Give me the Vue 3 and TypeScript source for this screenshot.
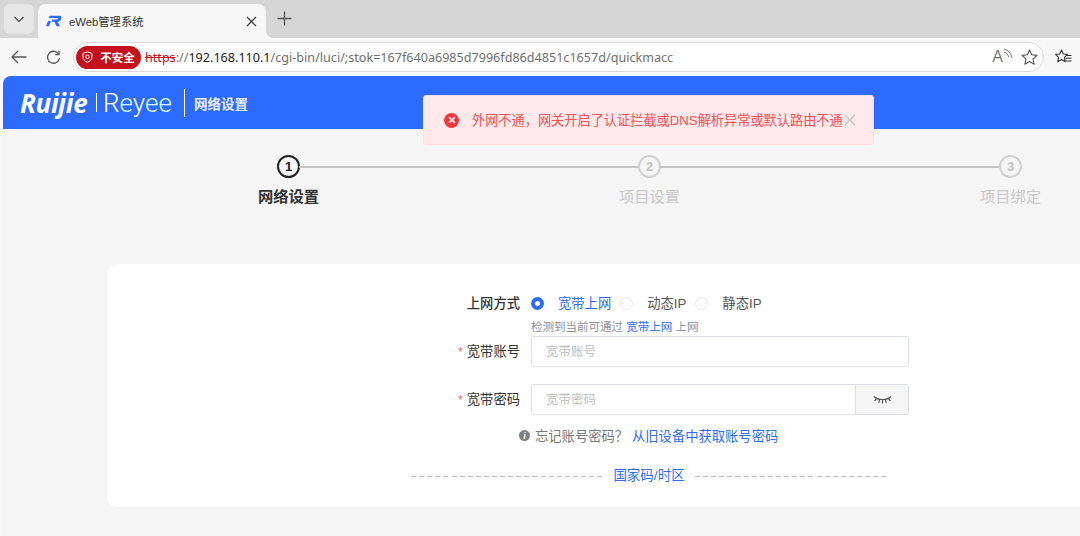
<template>
  <div class="window">
    <!-- browser tab strip -->
    <div class="tabstrip">
      <button class="tab-search">
        <svg width="12" height="12" viewBox="0 0 12 12"><path d="M1.5 4 L6 8.5 L10.5 4" fill="none" stroke="#444" stroke-width="1.2" /></svg>
      </button>
      <div class="tab">
        <svg class="favicon" width="16" height="12" viewBox="0 0 16 12">
          <path d="M3.5 0.8 H14 C15.6 .8 15.8 2.6 15 4.4 C14.4 5.8 13 6.6 11.6 6.8 L14 11.2 H10.6 L8.4 6.8 H5.4 L6.2 4.6 H11.4 C12.2 4.6 12.6 3 11.6 3 H2.8 Z" fill="#2d6bff" />
          <path d="M2 6 H5 L3 11.2 H0 Z" fill="#2d6bff" />
        </svg>
        <span class="tab-title">eWeb管理系统</span>
        <svg class="tab-close" width="11" height="11" viewBox="0 0 11 11"><path d="M1 1 L10 10 M10 1 L1 10" stroke="#333" stroke-width="1.2" /></svg>
      </div>
      <svg class="new-tab" width="15" height="15" viewBox="0 0 15 15"><path d="M7.5 0.5 V14.5 M0.5 7.5 H14.5" stroke="#555" stroke-width="1.3" /></svg>
    </div>

    <!-- address bar -->
    <div class="toolbar">
      <svg class="nav-back" width="16" height="14" viewBox="0 0 16 14"><path d="M15.5 7 H1 M7 1 L1 7 L7 13" fill="none" stroke="#555" stroke-width="1.3" /></svg>
      <svg class="nav-reload" width="15" height="15" viewBox="0 0 15 15"><path d="M12.6 4 A6 6 0 1 0 13.5 8" fill="none" stroke="#555" stroke-width="1.3" /><path d="M13 0.8 V4.6 H9.2" fill="none" stroke="#555" stroke-width="1.3" /></svg>
      <div class="omnibox">
        <span class="not-secure">
          <svg width="11" height="12" viewBox="0 0 11 12">
            <path d="M5.5 0.8 L10 2.4 V6 C10 8.6 7.8 10.4 5.5 11.2 C3.2 10.4 1 8.6 1 6 V2.4 Z" fill="none" stroke="#fff" stroke-width="1" />
            <circle cx="5.5" cy="5.8" r="1.8" fill="none" stroke="#fff" stroke-width="0.9" />
          </svg>
          不安全
        </span>
        <span class="url"><s class="scheme">https</s><span class="url-dim">://</span><span class="url-host">192.168.110.1</span><span class="url-dim">/cgi-bin/luci/;stok=167f640a6985d7996fd86d4851c1657d/quickmacc</span></span>
        <span class="read-aloud">A<svg width="10" height="11" viewBox="0 0 10 11"><path d="M1 1 C5 2 8 5 9 10 M1 4 C3.6 4.6 5 6.4 5.6 9" fill="none" stroke="#777" stroke-width="1" /></svg></span>
        <svg class="star" width="17" height="16" viewBox="0 0 17 16"><path d="M8.5 1 L10.7 5.8 L16 6.4 L12 10 L13.1 15.2 L8.5 12.6 L3.9 15.2 L5 10 L1 6.4 L6.3 5.8 Z" fill="none" stroke="#555" stroke-width="1.1" stroke-linejoin="round" /></svg>
      </div>
      <svg class="favorites" width="17" height="16" viewBox="0 0 17 16">
        <path d="M6.5 1 L8.3 5 L12.6 5.4 L9.4 8.4 L10.3 12.8 L6.5 10.6 L2.7 12.8 L3.6 8.4 L0.6 5.4 L4.7 5 Z" fill="none" stroke="#333" stroke-width="1.1" stroke-linejoin="round" />
        <path d="M11 6.5 H16.5 M10.5 9.2 H16.5 M10.5 12 H16.5" stroke="#333" stroke-width="1.1" />
      </svg>
    </div>

    <!-- page -->
    <div class="page">
      <header class="header">
        <span class="logo-ruijie">Ruijie</span>
        <span class="logo-bar"></span>
        <span class="logo-reyee">R<span class="logo-e">e</span>y<span class="logo-e">ee</span></span>
        <span class="logo-divider"></span>
        <span class="header-title">网络设置</span>
      </header>

      <div class="toast">
        <span class="toast-icon">
          <svg width="8" height="8" viewBox="0 0 8 8"><path d="M1.2 1.2 L6.8 6.8 M6.8 1.2 L1.2 6.8" stroke="#fff" stroke-width="1.6" /></svg>
        </span>
        <span class="toast-text">外网不通，网关开启了认证拦截或DNS解析异常或默认路由不通</span>
        <svg class="toast-close" width="12" height="12" viewBox="0 0 12 12"><path d="M1 1 L11 11 M11 1 L1 11" stroke="#c4c4c4" stroke-width="1.2" /></svg>
      </div>

      <div class="steps">
        <div v-for="(step, i) in steps" :key="step" class="step" :class="{ active: i === 0, last: i === steps.length - 1 }">
          <span class="step-num">{{ i + 1 }}</span>
          <span class="step-label">{{ step }}</span>
        </div>
      </div>

      <div class="card">
        <div class="row row-radio">
          <label class="label">上网方式</label>
          <div class="radios">
            <span class="radio checked"></span><span class="radio-text on">宽带上网</span>
            <span class="radio"></span><span class="radio-text">动态IP</span>
            <span class="radio"></span><span class="radio-text">静态IP</span>
          </div>
        </div>
        <div class="hint">检测到当前可通过 <a>宽带上网</a> 上网</div>
        <div class="row">
          <label class="label"><i>*</i>宽带账号</label>
          <div class="field"><input placeholder="宽带账号" /></div>
        </div>
        <div class="row row-pass">
          <label class="label"><i>*</i>宽带密码</label>
          <div class="field">
            <input placeholder="宽带密码" />
            <span class="addon">
              <svg width="19" height="10" viewBox="0 0 19 10"><path d="M1 1.5 C5 5.5 14 5.5 18 1.5 M3.6 3.6 L1.6 6 M9.5 5 V8.4 M6.5 4.8 L5.8 7.8 M12.5 4.8 L13.2 7.8 M15.4 3.6 L17.4 6" fill="none" stroke="#555" stroke-width="1.2" /></svg>
            </span>
          </div>
        </div>
        <div class="forgot">
          <span class="info">i</span>
          <span class="forgot-text">忘记账号密码？</span>
          <a>从旧设备中获取账号密码</a>
        </div>
        <div class="split">
          <span class="dash"></span>
          <a>国家码/时区</a>
          <span class="dash"></span>
        </div>
      </div>
    </div>
  </div>
</template>

<script setup lang="ts">
const steps: string[] = ['网络设置', '项目设置', '项目绑定']
</script>

<style>
html,
body {
  margin: 0;
  height: 536px;
  overflow: hidden;
}
</style>

<style scoped>
.window {
  width: 1080px;
  height: 536px;
  overflow: hidden;
  background: #f7f7f7;
  font-family: "Liberation Sans", "Noto Sans CJK SC", sans-serif;
  color: #333;
}

.tabstrip {
  height: 38px;
  background: #d6d6d6;
  display: flex;
  align-items: flex-end;
  box-sizing: border-box;
  padding-left: 4px;
}

.tab-search {
  width: 30px;
  height: 30px;
  margin-bottom: 4px;
  border: 0;
  border-radius: 6px;
  background: #e6e6e6;
  display: flex;
  align-items: center;
  justify-content: center;
  padding: 0;
}

.tab {
  position: relative;
  width: 228px;
  height: 34px;
  margin-left: 4px;
  background: #f7f7f7;
  border-radius: 8px 8px 0 0;
  display: flex;
  align-items: center;
  padding: 0 9px 0 8px;
  box-sizing: border-box;
}

/* chrome-style flare at the bottom of the tab */
.tab::after {
  content: "";
  position: absolute;
  right: -8px;
  bottom: 0;
  width: 8px;
  height: 8px;
  background: radial-gradient(circle at 100% 0, #d6d6d6 8px, #f7f7f7 8.5px);
}

.favicon {
  flex: none;
}

.tab-title {
  margin-left: 7px;
  font-size: 11.3px;
  color: #333;
  flex: 1;
}

.new-tab {
  margin: 0 0 12px 11px;
}

.toolbar {
  height: 38px;
  display: flex;
  align-items: center;
  box-sizing: border-box;
}

.nav-back {
  margin-left: 11px;
}

.nav-reload {
  margin-left: 19px;
}

.omnibox {
  margin-left: 12px;
  width: 971px;
  height: 30px;
  box-sizing: border-box;
  border: 1px solid #d9d9d9;
  border-radius: 15px;
  background: #fff;
  display: flex;
  align-items: center;
  padding-left: 2px;
}

.not-secure {
  width: 65px;
  height: 23px;
  flex: none;
  border-radius: 12px;
  background: #c5101d;
  color: #fff;
  font-size: 11.5px;
  font-weight: 700;
  display: flex;
  align-items: center;
  justify-content: center;
  gap: 7px;
}

.url {
  margin-left: 4px;
  font-family: "Noto Sans", "Liberation Sans", sans-serif;
  font-size: 12.6px;
  white-space: nowrap;
  flex: 1;
}

.scheme {
  color: #c5101d;
  text-decoration: line-through;
}

.url-dim {
  color: #6f6f6f;
}

.url-host {
  color: #222;
}

.read-aloud {
  display: flex;
  align-items: flex-start;
  font-size: 16px;
  color: #777;
  margin-right: 8px;
}

.star {
  margin-right: 5px;
}

.favorites {
  margin-left: 11px;
}

.page {
  position: relative;
  height: 460px;
  background: #f5f5f5;
  border-top-left-radius: 8px;
  overflow: hidden;
  margin-left: 3px;
  margin-right: -3px;
}

.header {
  height: 53px;
  background: #2d6bff;
  color: #fff;
  display: flex;
  align-items: center;
  padding-left: 17px;
}

.logo-ruijie {
  font-family: "Open Sans", "Liberation Sans", sans-serif;
  font-size: 26px;
  font-weight: 700;
  font-style: italic;
  letter-spacing: -0.3px;
  width: 69px;
  white-space: nowrap;
}

.logo-bar {
  width: 1px;
  height: 19px;
  background: #fff;
  margin-left: 7px;
}

.logo-reyee {
  font-family: Roboto, "Liberation Sans", sans-serif;
  font-size: 26px;
  font-weight: 300;
  margin-left: 6px;
  width: 71px;
  white-space: nowrap;
}

.logo-e {
  color: #d8fbf4;
}

.logo-divider {
  width: 1px;
  height: 28px;
  background: #fff;
  margin-left: 10px;
}

.header-title {
  margin-left: 9px;
  font-size: 13.5px;
  font-weight: 700;
  color: #e8efff;
}

.toast {
  position: absolute;
  left: 420px;
  top: 19px;
  width: 451px;
  height: 50px;
  box-sizing: border-box;
  background: #ffe9ea;
  border: 1px solid #ffdfe1;
  border-radius: 3px;
  display: flex;
  align-items: center;
  padding-left: 20px;
  font-size: 13.2px;
  color: #ff4d55;
  white-space: nowrap;
}

.toast-icon {
  width: 15px;
  height: 15px;
  border-radius: 50%;
  background: #f5363f;
  display: flex;
  align-items: center;
  justify-content: center;
  flex: none;
}

.toast-text {
  margin-left: 13px;
  position: relative;
  top: -1px;
}

.toast-close {
  margin-left: 1px;
  flex: none;
}

.steps {
  display: grid;
  grid-template-columns: repeat(3, 361px);
  padding: 26px 0 0 105px;
  height: 135px;
  box-sizing: border-box;
  width: 1400px;
}

.step {
  position: relative;
  display: flex;
  flex-direction: column;
  align-items: center;
  width: 361px;
  margin-left: -180px;
  transform: translateX(180px);
}

.step:not(.last)::after {
  content: "";
  position: absolute;
  left: 191px;
  top: 11px;
  width: 339px;
  height: 2px;
  background: #c4c4c4;
}

.step-num {
  width: 23px;
  height: 23px;
  box-sizing: border-box;
  border: 2px solid #d0d0d0;
  border-radius: 50%;
  background: #f5f5f5;
  color: #c4c4c4;
  font-size: 13px;
  font-weight: 700;
  display: flex;
  align-items: center;
  justify-content: center;
}

.step-label {
  margin-top: 9px;
  font-size: 15.3px;
  line-height: 20px;
  color: #c8c8c8;
  font-weight: 400;
}

.step.active .step-num {
  border-color: #222;
  color: #222;
}

.step.active .step-label {
  color: #333;
  font-weight: 700;
}

.card {
  margin-left: 104px;
  width: 1000px;
  height: 243px;
  background: #fff;
  border-radius: 10px;
  box-sizing: border-box;
  padding-top: 29px;
}

.row {
  display: flex;
  align-items: center;
}

.row-radio {
  height: 20px;
}

.row-pass {
  margin-top: 17px;
}

.label {
  width: 413px;
  text-align: right;
  font-size: 13.3px;
  color: #333;
  flex: none;
  position: relative;
  top: -1px;
}

.label i {
  color: #f66;
  font-style: normal;
  margin-right: 4px;
}

.row:first-child .label {
  font-weight: 500;
}

.radios {
  margin-left: 11px;
  display: flex;
  align-items: center;
  font-size: 13.3px;
  color: #555;
}

.radio {
  width: 13px;
  height: 13px;
  box-sizing: border-box;
  border: 1px solid #e2e4e8;
  border-radius: 50%;
  background: #fff;
}

.radio.checked {
  border: 4px solid #2d6bff;
  background: #fff;
}

.radio-text {
  margin-left: 14px;
  margin-right: 9px;
  position: relative;
  top: -1px;
}

.radio-text.on {
  color: #2d6bff;
}

.hint {
  margin: 7px 0 2px 424px;
  font-size: 11.5px;
  line-height: 14px;
  color: #8a8f99;
}

.hint a,
.forgot a,
.split a {
  color: #2d6bff;
}

.field {
  margin-left: 11px;
  width: 378px;
  height: 31px;
  box-sizing: border-box;
  border: 1px solid #dcdfe6;
  border-radius: 3px;
  display: flex;
  overflow: hidden;
  background: #fff;
}

.field input {
  flex: 1;
  min-width: 0;
  border: 0;
  outline: 0;
  padding: 0 0 0 14px;
  font: inherit;
  font-size: 12.5px;
}

.field input::placeholder {
  color: #bdbdbd;
}

.addon {
  width: 52px;
  flex: none;
  background: #f5f5f5;
  border-left: 1px solid #dcdfe6;
  display: flex;
  align-items: center;
  justify-content: center;
}

.forgot {
  margin: 12px 0 0 412px;
  height: 17px;
  display: flex;
  align-items: center;
  font-size: 13.3px;
  color: #777;
  white-space: nowrap;
}

.info {
  width: 11px;
  height: 11px;
  border-radius: 50%;
  background: #808080;
  color: #fff;
  font-size: 9px;
  font-weight: 700;
  font-style: italic;
  display: flex;
  align-items: center;
  justify-content: center;
}

.forgot-text {
  margin-left: 5px;
  width: 97px;
}

.split {
  margin: 23px 0 0 304px;
  width: 476px;
  display: flex;
  align-items: center;
  font-size: 13.5px;
  line-height: 18px;
}

.split a {
  margin: 0 10px;
}

.dash {
  flex: 1;
  height: 1px;
  background: repeating-linear-gradient(90deg, #bbb 0 5px, transparent 5px 8.1px);
}
</style>
